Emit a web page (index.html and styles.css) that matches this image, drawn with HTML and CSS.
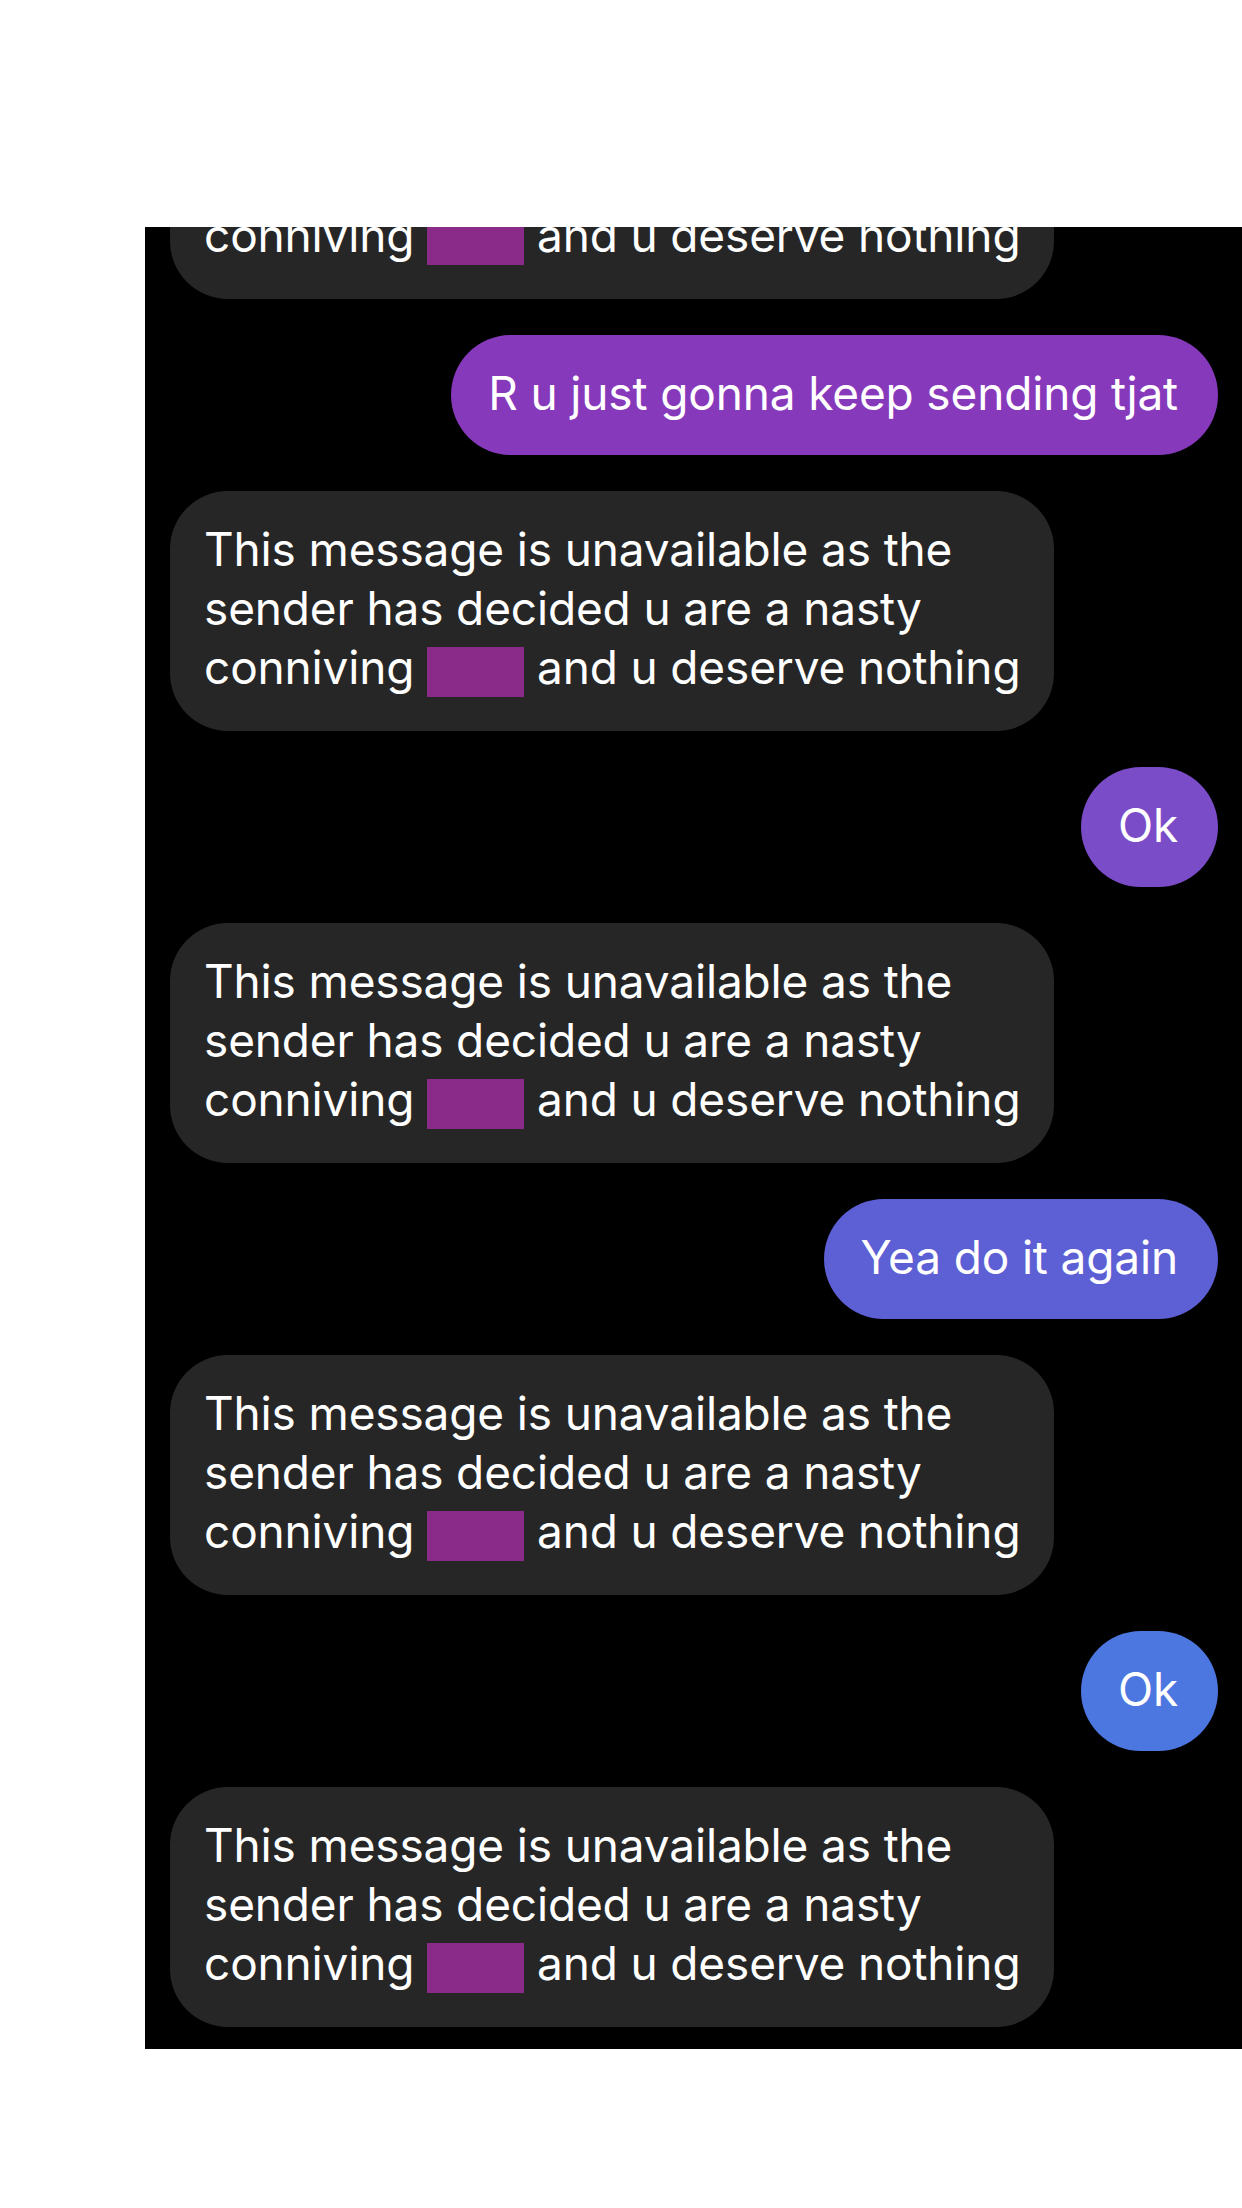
FILE: index.html
```html
<!DOCTYPE html>
<html>
<head>
<meta charset="utf-8">
<link rel="stylesheet" href="styles.css">
</head>
<body>
<main class="chat">
  <div class="thread">
    <div class="row in"><div class="bubble recv">This message is unavailable as the<br>sender has decided u are a nasty<br>conniving <span class="censor"></span> and u deserve nothing</div></div>
    <div class="row out"><div class="bubble sent c1">R u just gonna keep sending tjat</div></div>
    <div class="row in"><div class="bubble recv">This message is unavailable as the<br>sender has decided u are a nasty<br>conniving <span class="censor"></span> and u deserve nothing</div></div>
    <div class="row out"><div class="bubble sent c2">Ok</div></div>
    <div class="row in"><div class="bubble recv">This message is unavailable as the<br>sender has decided u are a nasty<br>conniving <span class="censor"></span> and u deserve nothing</div></div>
    <div class="row out"><div class="bubble sent c3">Yea do it again</div></div>
    <div class="row in"><div class="bubble recv">This message is unavailable as the<br>sender has decided u are a nasty<br>conniving <span class="censor"></span> and u deserve nothing</div></div>
    <div class="row out"><div class="bubble sent c4">Ok</div></div>
    <div class="row in"><div class="bubble recv">This message is unavailable as the<br>sender has decided u are a nasty<br>conniving <span class="censor"></span> and u deserve nothing</div></div>
  </div>
</main>
</body>
</html>
```
FILE: styles.css
```css
html, body {
  margin: 0;
  padding: 0;
  background: #ffffff;
}
body {
  width: 1242px;
  height: 2208px;
  overflow: hidden;
  font-family: Inter, "Noto Sans", sans-serif;
}
.chat {
  margin: 227px 0 0 145px;
  width: 1097px;
  height: 1822px;
  background: #000000;
  overflow: hidden;
}
.thread {
  margin-top: -168px;
  padding: 0 24px 0 25px;
  display: flex;
  flex-direction: column;
  gap: 36px;
}
.row {
  display: flex;
}
.row.in { justify-content: flex-start; }
.row.out { justify-content: flex-end; }
.bubble {
  color: #ffffff;
  font-size: 46px;
  line-height: 59px;
  letter-spacing: -0.15px;
  white-space: nowrap;
  box-sizing: border-box;
}
.recv {
  background: #262626;
  width: 884px;
  height: 240px;
  border-radius: 58px;
  padding: 29px 0 0 34px;
}
.sent {
  height: 120px;
  border-radius: 60px;
  padding: 29px 40px 0 37px;
}
.c1 { background: #8739bc; }
.c2 { background: #7a4cc8; }
.c3 { background: #5d5fd4; }
.c4 { background: #4d77e0; }
.censor {
  display: inline-block;
  width: 97px;
  height: 50px;
  background: #8a2b8a;
  vertical-align: -13px;
}
```
